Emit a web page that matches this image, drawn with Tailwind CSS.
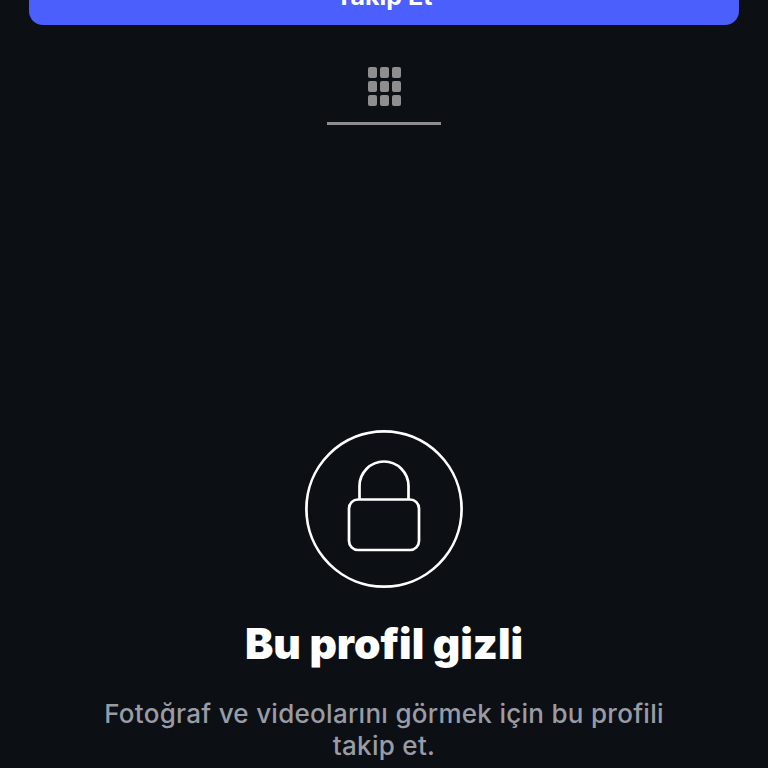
<!DOCTYPE html>
<html lang="tr">
  <head>
    <meta charset="UTF-8" />
    <meta name="viewport" content="width=device-width, initial-scale=1.0" />
    <title>Bu profil gizli</title>
    <script src="https://cdn.jsdelivr.net/npm/@tailwindcss/browser@4"></script>
  </head>
  <body class="bg-[#0c1014] font-['Inter',sans-serif] h-[768px] overflow-hidden">
    <!-- Takip butonu, sayfa kaydirilmis oldugu icin ust kismi kesik -->
    <div class="px-[29px]">
      <button class="w-full h-[57px] -mt-[32px] block rounded-[14px] bg-[#4a5ffb] text-white text-[25px] font-bold">
        Takip Et
      </button>
    </div>

    <!-- Sekme: izgara ikonu ve alt cizgi -->
    <div class="flex justify-center mt-[42px]">
      <div class="w-[114px] h-[58px] flex justify-center border-b-[3px] border-[#8e8e8e]">
        <div class="grid grid-cols-3 gap-x-[3px] gap-y-[3px] w-[33px] h-[39px]">
          <span class="bg-[#8e8e8e] rounded-[2px]"></span>
          <span class="bg-[#8e8e8e] rounded-[2px]"></span>
          <span class="bg-[#8e8e8e] rounded-[2px]"></span>
          <span class="bg-[#8e8e8e] rounded-[2px]"></span>
          <span class="bg-[#8e8e8e] rounded-[2px]"></span>
          <span class="bg-[#8e8e8e] rounded-[2px]"></span>
          <span class="bg-[#8e8e8e] rounded-[2px]"></span>
          <span class="bg-[#8e8e8e] rounded-[2px]"></span>
          <span class="bg-[#8e8e8e] rounded-[2px]"></span>
        </div>
      </div>
    </div>

    <!-- Gizli profil bilgisi -->
    <div class="flex flex-col items-center mt-[305px]">
      <svg class="w-[158px] h-[158px]" viewBox="0 0 158 158" fill="none" stroke="#ffffff" stroke-width="2.7">
        <circle cx="79" cy="79" r="77.6" />
        <path d="M54.5 69V56a24.5 24.5 0 0 1 49 0V69" />
        <rect x="44" y="69.5" width="70" height="50.5" rx="9" />
      </svg>
      <h1 class="mt-[29px] text-[42.5px] leading-[54px] font-black text-white">Bu profil gizli</h1>
      <p class="mt-[27px] w-[600px] text-center text-[26px] leading-[32px] font-medium tracking-[0.28px] text-[#9a9ca5]">
        Fotoğraf ve videolarını görmek için bu profili takip et.
      </p>
    </div>
  </body>
</html>
